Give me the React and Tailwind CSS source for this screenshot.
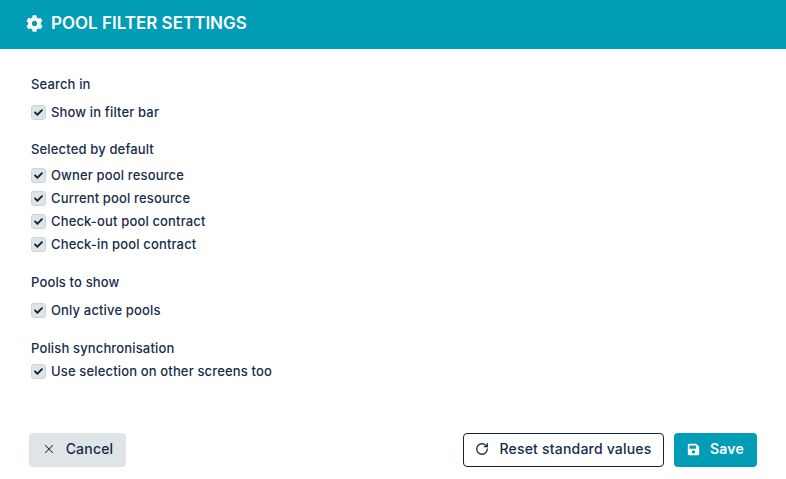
import { X, RotateCw } from "lucide-react";
import { FaCheck, FaCog, FaSave } from "react-icons/fa";

function Row({ label }) {
  return (
    <div className="flex items-center h-[23px]">
      <span className="w-[15px] h-[15px] rounded-[3px] bg-[#dfe4e7] border border-[#ccd3d8] flex items-center justify-center mr-[5px] shrink-0">
        <FaCheck size={9} className="text-[#0b1c33]" />
      </span>
      <span>{label}</span>
    </div>
  );
}

export default function App() {
  return (
    <div className="w-[786px] h-[479px] bg-white text-[#162c4a] text-[13px] font-['Inter',sans-serif] font-medium tracking-[0.15px] flex flex-col">
      <div className="h-[49px] bg-[#019cb6] flex items-center pl-[26px] pb-[1px] gap-[8px] shrink-0">
        <FaCog size={17} className="text-white shrink-0 mb-[2px]" />
        <h1 className="text-white text-[17px] font-semibold tracking-normal">POOL FILTER SETTINGS</h1>
      </div>

      <div className="pl-[31px] pt-[26px] flex-1">
        <div className="h-[18px] leading-[18px]">Search in</div>
        <div className="mt-[8px]"><Row label="Show in filter bar" /></div>

        <div className="h-[18px] leading-[18px] mt-[16px]">Selected by default</div>
        <div className="mt-[6px]">
          <Row label="Owner pool resource" />
          <Row label="Current pool resource" />
          <Row label="Check-out pool contract" />
          <Row label="Check-in pool contract" />
        </div>

        <div className="h-[18px] leading-[18px] mt-[17px]">Pools to show</div>
        <div className="mt-[8px]"><Row label="Only active pools" /></div>

        <div className="h-[18px] leading-[18px] mt-[17px]">Polish synchronisation</div>
        <div className="mt-[3px]"><Row label="Use selection on other screens too" /></div>
      </div>

      <div className="flex justify-between items-center pl-[29px] pr-[29px] pb-[12px] text-[14px] leading-[18px] tracking-[0.2px]">
        <button className="h-[34px] w-[97px] rounded-[4px] bg-[#dfe4e7] flex items-center justify-center gap-[10px] pb-[2px]">
          <X size={14} strokeWidth={1.75} />
          Cancel
        </button>
        <div className="flex gap-[10px]">
          <button className="h-[34px] w-[201px] rounded-[4px] border border-[#10243e] bg-white flex items-center justify-center gap-[10px] pb-[2px]">
            <RotateCw size={14} strokeWidth={2.25} />
            Reset standard values
          </button>
          <button className="h-[34px] w-[83px] rounded-[4px] bg-[#019cb6] text-white flex items-center justify-center gap-[10px] font-semibold pb-[2px]">
            <FaSave size={13} className="shrink-0" />
            Save
          </button>
        </div>
      </div>
    </div>
  );
}
